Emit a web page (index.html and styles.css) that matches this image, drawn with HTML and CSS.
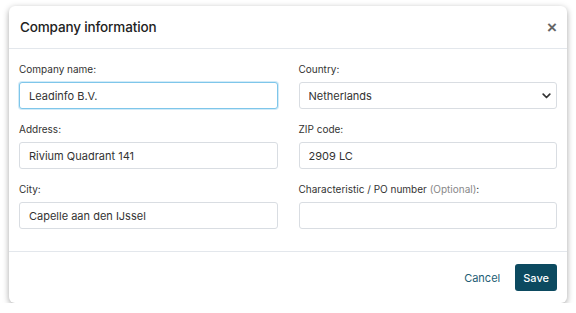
FILE: index.html
```html
<!DOCTYPE html>
<html lang="en">
<head>
    <meta charset="UTF-8">
    <meta name="viewport" content="width=device-width, initial-scale=1.0">
    <title>Company information</title>
    <link rel="stylesheet" href="styles.css">
</head>
<body>
    <div class="modal">
        <div class="modal-header">
            <h2>Company information</h2>
            <button class="close-btn" type="button">&times;</button>
        </div>
        <form class="modal-body">
            <div class="field">
                <label for="company">Company name:</label>
                <input type="text" id="company" class="focused" value="Leadinfo B.V.">
            </div>
            <div class="field">
                <label for="country">Country:</label>
                <div class="select-wrap">
                    <select id="country">
                        <option>Netherlands</option>
                    </select>
                    <svg class="chevron" width="9" height="6" viewBox="0 0 9 6">
                        <path d="M1.2 1.2 L4.5 4.5 L7.8 1.2" fill="none" stroke="#333" stroke-width="1.7" stroke-linecap="round" stroke-linejoin="round"/>
                    </svg>
                </div>
            </div>
            <div class="field">
                <label for="address">Address:</label>
                <input type="text" id="address" value="Rivium Quadrant 141">
            </div>
            <div class="field">
                <label for="zip">ZIP code:</label>
                <input type="text" id="zip" value="2909 LC">
            </div>
            <div class="field">
                <label for="city">City:</label>
                <input type="text" id="city" value="Capelle aan den IJssel">
            </div>
            <div class="field">
                <label for="po">Characteristic / PO number <span class="optional">(Optional)</span>:</label>
                <input type="text" id="po" value="">
            </div>
        </form>
        <div class="modal-footer">
            <button type="button" class="btn-link">Cancel</button>
            <button type="button" class="btn-primary">Save</button>
        </div>
    </div>
</body>
</html>
```

FILE: styles.css
```css
body {
    font-family: Inter, "Noto Sans", sans-serif;
    background-color: #fff;
    margin: 0;
    padding: 6px 9px 0 9px;
    color: #222;
}

.modal {
    width: 558px;
    background-color: #fff;
    border-radius: 6px;
    box-shadow: 0 2px 6px rgba(0, 0, 0, 0.35);
}

.modal-header {
    height: 42px;
    display: flex;
    align-items: center;
    justify-content: space-between;
    padding: 0 10px 0 11px;
    border-bottom: 1px solid #e3e7ec;
}

.modal-header h2 {
    margin: 0;
    font-size: 13.5px;
    font-weight: 500;
    letter-spacing: -0.15px;
    color: #222;
}

.close-btn {
    border: none;
    background: none;
    padding: 0;
    font-family: Arial, sans-serif;
    font-size: 17px;
    font-weight: bold;
    color: #666;
    line-height: 1;
    cursor: pointer;
}

.modal-body {
    display: grid;
    grid-template-columns: 1fr 1fr;
    column-gap: 21px;
    padding: 12px 10px 10px 10px;
}

.field {
    display: flex;
    flex-direction: column;
    margin-bottom: 12px;
}

.field label {
    font-size: 10px;
    line-height: 16px;
    color: #333;
    margin-bottom: 5px;
}

.optional {
    color: #888;
}

.field input, .field select {
    height: 27px;
    box-sizing: border-box;
    border: 1px solid #d9dde2;
    border-radius: 3px;
    padding: 0 9px;
    font-family: Inter, "Noto Sans", sans-serif;
    font-size: 11px;
    color: #333;
    background-color: #fff;
    width: 100%;
}

.field input.focused {
    border-color: #7ec6ea;
    box-shadow: 0 0 0 1px rgba(126, 198, 234, 0.35);
    outline: none;
}

.select-wrap {
    position: relative;
}

.field select {
    appearance: none;
    -webkit-appearance: none;
}

.chevron {
    position: absolute;
    right: 6px;
    top: 11px;
}

.modal-footer {
    display: flex;
    justify-content: flex-end;
    align-items: center;
    gap: 8px;
    padding: 12px 10px;
    border-top: 1px solid #e3e7ec;
}

.btn-link {
    border: none;
    background: none;
    color: #1d5d74;
    font-family: Inter, "Noto Sans", sans-serif;
    font-size: 11px;
    padding: 0 7px;
    height: 27px;
}

.btn-primary {
    border: none;
    border-radius: 3px;
    background-color: #0c4a60;
    color: #fff;
    font-family: Inter, "Noto Sans", sans-serif;
    font-size: 11px;
    font-weight: 500;
    height: 27px;
    padding: 0 8px;
}
```
